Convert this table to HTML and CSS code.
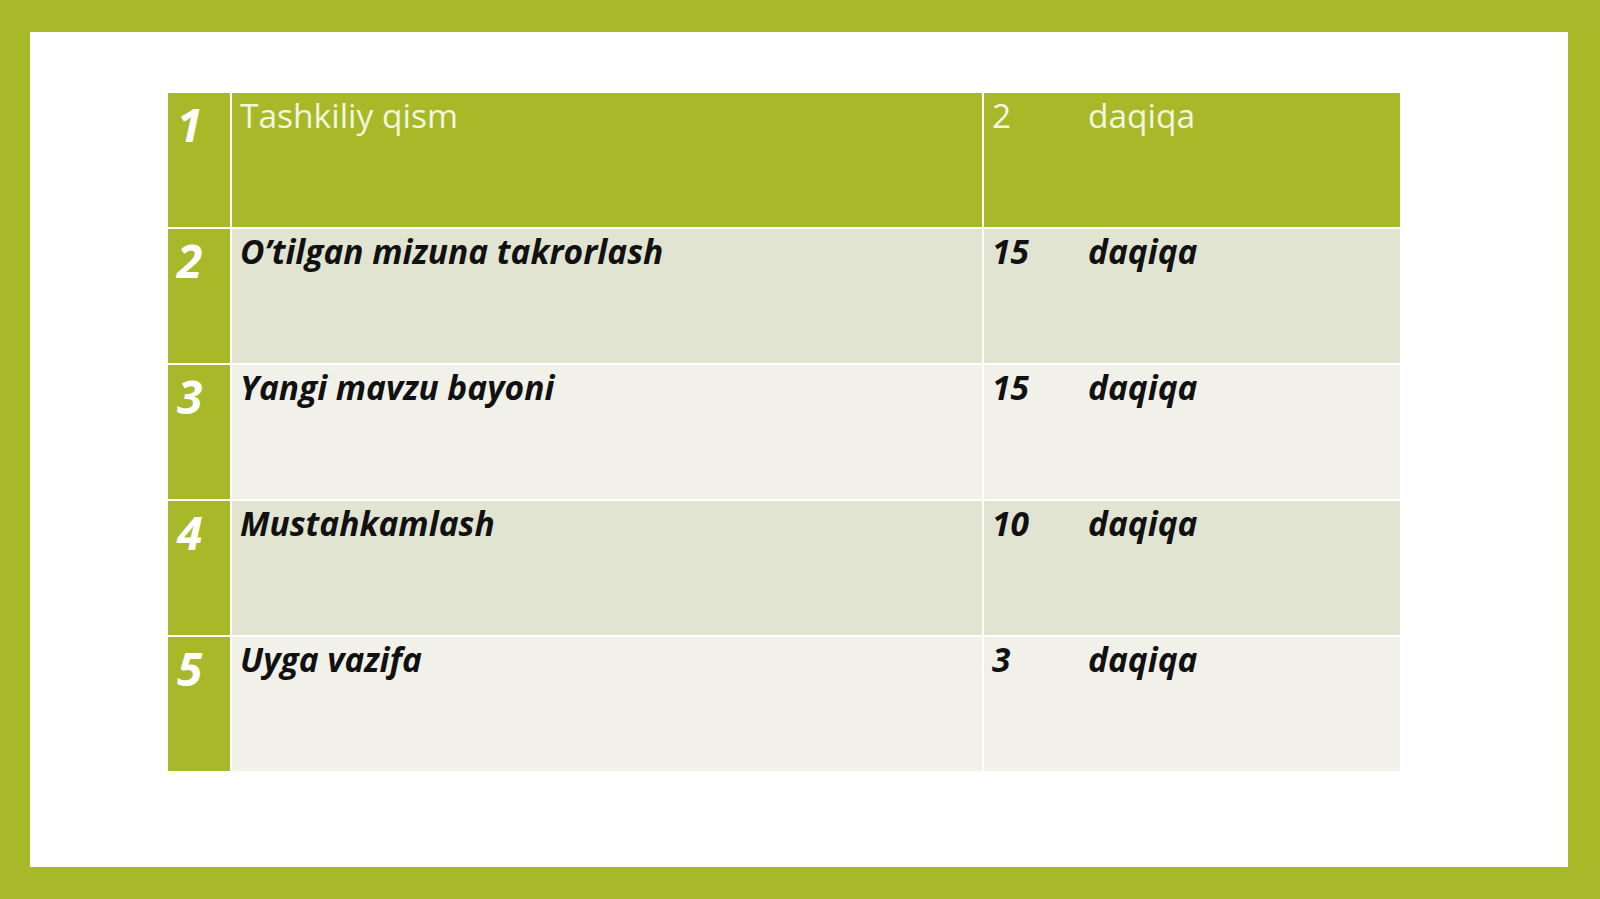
FILE: index.html
```html
<!DOCTYPE html>
<html>
<head>
<meta charset="utf-8">
<link rel="stylesheet" href="styles.css">
</head>
<body>
<div class="slide">
  <div class="plan">
    <div class="num">1</div>
    <div class="cell head">Tashkiliy qism</div>
    <div class="cell head"><span class="min">2</span>daqiqa</div>

    <div class="num">2</div>
    <div class="cell dark em">O’tilgan mizuna takrorlash</div>
    <div class="cell dark em"><span class="min">15</span>daqiqa</div>

    <div class="num">3</div>
    <div class="cell light em">Yangi mavzu bayoni</div>
    <div class="cell light em"><span class="min">15</span>daqiqa</div>

    <div class="num">4</div>
    <div class="cell dark em">Mustahkamlash</div>
    <div class="cell dark em"><span class="min">10</span>daqiqa</div>

    <div class="num">5</div>
    <div class="cell light em">Uyga vazifa</div>
    <div class="cell light em"><span class="min">3</span>daqiqa</div>
  </div>
</div>
</body>
</html>
```

FILE: styles.css
```css
html, body {
  margin: 0;
  padding: 0;
}

body {
  background: #a7b929;
  width: 1600px;
  height: 899px;
  padding: 32px 32px 32px 30px;
  box-sizing: border-box;
  font-family: "Open Sans", "Noto Sans", sans-serif;
}

.slide {
  background: #ffffff;
  height: 835px;
  padding: 61px 0 0 138px;
  box-sizing: border-box;
}

.plan {
  display: grid;
  grid-template-columns: 62px 750px 416px;
  grid-template-rows: repeat(5, 134px);
  gap: 2px;
  width: 1232px;
}

.num {
  background: #a7b929;
  color: #ffffff;
  font-weight: 700;
  font-style: italic;
  font-size: 46px;
  line-height: 1;
  padding: 8px 0 0 9px;
}

.cell {
  font-size: 33.5px;
  line-height: 1;
  padding: 6px 8px 0 8px;
}

.head {
  background: #a7b929;
  color: #f3f6df;
  font-weight: 400;
}

.em {
  font-weight: 700;
  font-style: italic;
  color: #111111;
}

.dark {
  background: #e2e4d2;
}

.light {
  background: #f1f1ea;
}

.min {
  display: inline-block;
  width: 96px;
}
```
